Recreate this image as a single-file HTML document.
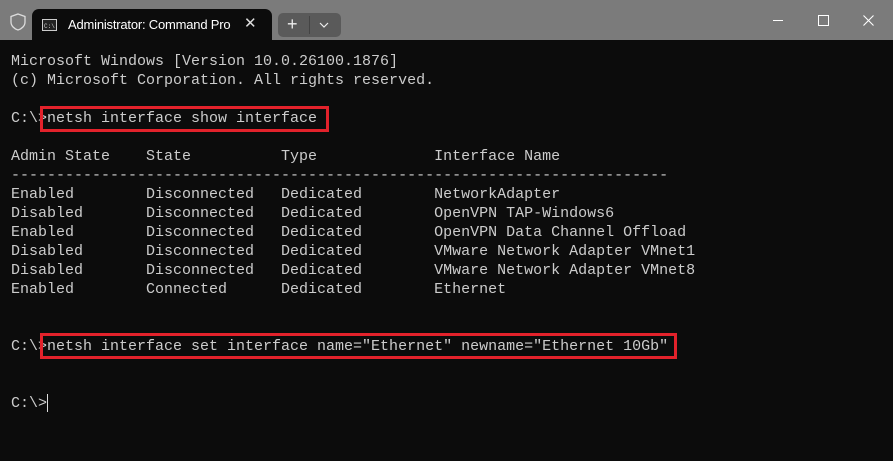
<!DOCTYPE html>
<html><head><style>
body{margin:0;width:893px;height:461px;background:#0c0c0c;overflow:hidden;position:relative;font-family:"Liberation Sans",sans-serif}
.tb{position:absolute;left:0;top:0;width:893px;height:40px;background:#7b7b7b}
.tab{position:absolute;left:32px;top:9px;width:240px;height:31px;background:#0c0c0c;border-radius:7px 7px 0 0}
.tab .t{position:absolute;left:36px;top:8px;color:#fff;font-size:13px;letter-spacing:-0.2px}
.tab .x{position:absolute;left:212px;top:5px;color:#ddd;font-size:15px}
.plus{position:absolute;left:278px;top:13px;width:63px;height:24px;background:#5a5a5a;border-radius:5px}
.term{position:absolute;left:11px;top:52px;color:#cccccc;font-family:"Liberation Mono",monospace;font-size:15px;line-height:19px;white-space:pre;margin:0}
.box{position:absolute;border:3px solid #e3222b;box-sizing:border-box}
</style></head><body>
<div class="tb">
<svg style="position:absolute;left:10px;top:13px" width="16" height="18" viewBox="0 0 16 18"><path d="M8 1 L15 3.5 V9 C15 13 11.5 16 8 17 C4.5 16 1 13 1 9 V3.5 Z" fill="none" stroke="#ddd" stroke-width="1.3"/></svg>
<div class="tab">
<svg style="position:absolute;left:10px;top:10px" width="15" height="12"><rect x="0.5" y="0.5" width="14" height="11" fill="#222" stroke="#ccc"/><text x="2" y="9" font-size="6" fill="#ccc" font-family="Liberation Mono">C:\</text></svg>
<div class="t">Administrator: Command Pro</div>
<div class="x">✕</div>
</div>
<div class="plus"><span style="position:absolute;left:9px;top:1px;color:#eee;font-size:18px">+</span><span style="position:absolute;left:31px;top:3px;width:1px;height:18px;background:#444"></span><svg style="position:absolute;left:41px;top:9px" width="10" height="6"><path d="M1 1 L5 5 L9 1" fill="none" stroke="#eee" stroke-width="1.2"/></svg></div>
<div style="position:absolute;left:773px;top:20px;width:10px;height:1px;background:#fff"></div>
<div style="position:absolute;left:818px;top:15px;width:9px;height:9px;border:1px solid #fff"></div>
<svg style="position:absolute;left:863px;top:15px" width="11" height="11"><path d="M0.5 0.5 L10.5 10.5 M10.5 0.5 L0.5 10.5" stroke="#fff" stroke-width="1.1"/></svg>
</div>
<pre class="term">Microsoft Windows [Version 10.0.26100.1876]
(c) Microsoft Corporation. All rights reserved.

C:\>netsh interface show interface

Admin State    State          Type             Interface Name
-------------------------------------------------------------------------
Enabled        Disconnected   Dedicated        NetworkAdapter
Disabled       Disconnected   Dedicated        OpenVPN TAP-Windows6
Enabled        Disconnected   Dedicated        OpenVPN Data Channel Offload
Disabled       Disconnected   Dedicated        VMware Network Adapter VMnet1
Disabled       Disconnected   Dedicated        VMware Network Adapter VMnet8
Enabled        Connected      Dedicated        Ethernet


C:\>netsh interface set interface name="Ethernet" newname="Ethernet 10Gb"


C:\></pre>
<div style="position:absolute;left:47px;top:394px;width:1px;height:18px;background:#ddd"></div>
<div class="box" style="left:40px;top:106px;width:289px;height:26px"></div>
<div class="box" style="left:40px;top:333px;width:637px;height:26px"></div>
</body></html>
